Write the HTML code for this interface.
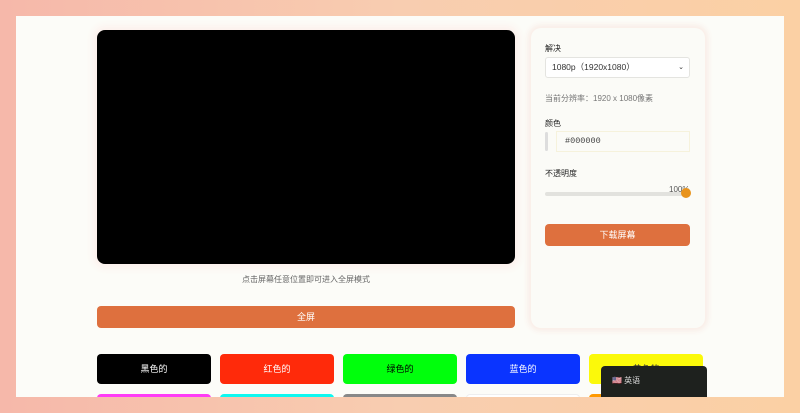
<!DOCTYPE html>
<html><head><meta charset="utf-8"><style>
*{margin:0;padding:0;box-sizing:border-box}
body{width:800px;height:413px;overflow:hidden;background:linear-gradient(90deg,#f6b8aa,#f8cdb0 50%,#fbd0a4);font-family:"Liberation Sans","Noto Sans CJK SC",sans-serif;position:relative}
.page{position:absolute;left:16px;top:16px;width:768px;height:381px;background:#fcfcf8;overflow:hidden}
.abs{position:absolute}
.screen{left:81px;top:14px;width:418px;height:234px;background:#000;border-radius:8px;box-shadow:0 0 8px 4px #fdf0ec}
.cap{left:81px;top:258px;width:418px;text-align:center;font-size:8px;color:#666}
.btn{background:#de703e;color:#fff;border-radius:4px;text-align:center;font-size:9px}
.panel{left:515px;top:12px;width:174px;height:300px;background:#fbfbf7;border-radius:10px;box-shadow:0 0 6px 3px #f9ece6}
.lbl{font-size:8px;color:#222}
.c{width:114px;height:30px;border-radius:4px;font-size:9px;text-align:center;line-height:30px;color:#fff}
</style></head><body>
<div class="page">
<div class="abs screen"></div>
<div class="abs cap">点击屏幕任意位置即可进入全屏模式</div>
<div class="abs btn" style="left:81px;top:290px;width:418px;height:22px;line-height:22px">全屏</div>
<div class="abs panel">
 <div class="abs lbl" style="left:14px;top:15px">解决</div>
 <div class="abs" style="left:14px;top:29px;width:145px;height:21px;border:1px solid #e4e4e0;border-radius:3px;font-size:8.5px;color:#333;line-height:19px;padding-left:6px;background:#fff">1080p（1920x1080）<span style="position:absolute;right:5px;font-size:7px">⌄</span></div>
 <div class="abs" style="left:14px;top:65px;font-size:8px;color:#777">当前分辨率：1920 x 1080像素</div>
 <div class="abs lbl" style="left:14px;top:90px">颜色</div>
 <div class="abs" style="left:14px;top:104px;width:3px;height:19px;background:#ddd;border-radius:2px"></div>
 <div class="abs" style="left:25px;top:103px;width:134px;height:21px;border:1px solid #f6f2dc;font-family:'Liberation Mono',monospace;font-size:8.5px;color:#444;line-height:19px;padding-left:8px">#000000</div>
 <div class="abs lbl" style="left:14px;top:140px">不透明度</div>
 <div class="abs" style="left:138px;top:157px;font-size:8px;color:#555">100%</div>
 <div class="abs" style="left:14px;top:164px;width:145px;height:4px;background:#e2e2de;border-radius:2px"></div>
 <div class="abs" style="left:150px;top:160px;width:10px;height:10px;background:#e8931c;border-radius:50%"></div>
 <div class="abs btn" style="left:14px;top:196px;width:145px;height:22px;line-height:22px">下载屏幕</div>
</div>
<div class="abs c" style="left:81px;top:338px;background:#000">黑色的</div>
<div class="abs c" style="left:204px;top:338px;background:#ff2a0a">红色的</div>
<div class="abs c" style="left:327px;top:338px;background:#00ff0c;color:#000">绿色的</div>
<div class="abs c" style="left:450px;top:338px;background:#0a34ff">蓝色的</div>
<div class="abs c" style="left:573px;top:338px;background:#fbf90a;color:#333">黄色的</div>
<div class="abs c" style="left:81px;top:378px;background:#ff3cf5"></div>
<div class="abs c" style="left:204px;top:378px;background:#0ff8f0"></div>
<div class="abs c" style="left:327px;top:378px;background:#888"></div>
<div class="abs c" style="left:450px;top:378px;background:#fff;border:1px solid #eee"></div>
<div class="abs c" style="left:573px;top:378px;background:#f90"></div>
<div class="abs" style="left:585px;top:350px;width:106px;height:40px;background:#1e211e;border-radius:4px;color:#ddd;font-size:8px;padding:9px 0 0 11px">🇺🇸 英语</div>
</div>
</body></html>
